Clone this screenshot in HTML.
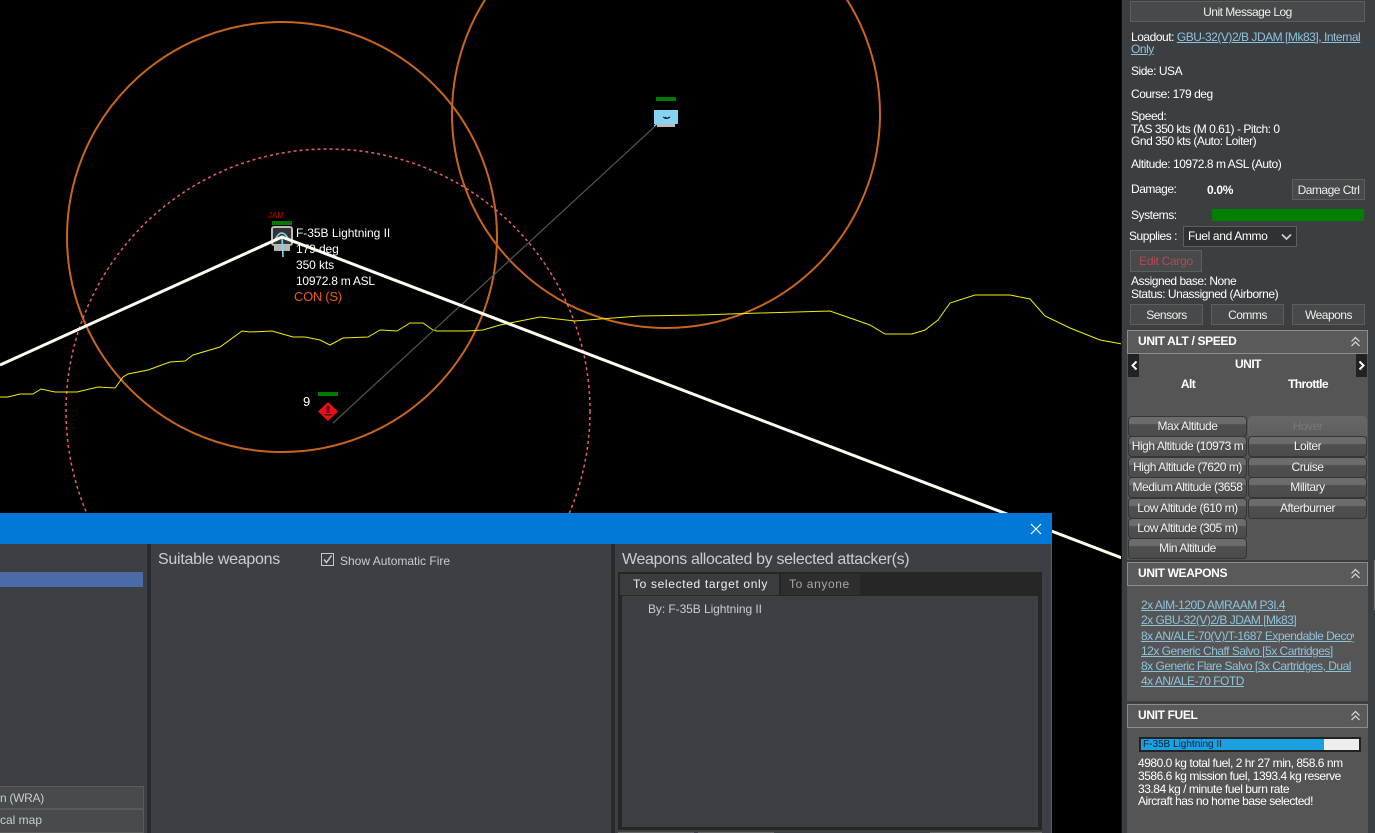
<!DOCTYPE html>
<html><head><meta charset="utf-8">
<style>
html,body{margin:0;padding:0;background:#000;}
#r{position:relative;width:1375px;height:833px;overflow:hidden;background:#000;font-family:"Liberation Sans",Arial,sans-serif;font-size:12px;color:#fff;}
#r div{position:absolute;box-sizing:border-box;white-space:nowrap;}
.t{line-height:14px;height:14px;letter-spacing:-.47px;}
.c{text-align:center;}
.b{background:#464a4a;border:1px solid #5c5f5f;text-align:center;line-height:20px;color:#eee;letter-spacing:-.5px;}
.h{left:1127px;width:241px;height:24px;background:#5a5a5a;border:1px solid #8c8c8c;font-weight:bold;line-height:21px;padding-left:10px;letter-spacing:-.35px;}
.g{height:21px;width:119px;border:1px solid #363636;border-radius:4px;background:linear-gradient(#6c6c6c 0,#6c6c6c 35%,#4f4f4f 40%,#4c4c4c 100%);text-align:center;line-height:18px;color:#f2f2f2;letter-spacing:-.45px;overflow:hidden;}
.l{left:1141px;color:#8ec3dc;text-decoration:underline;line-height:14px;height:15px;letter-spacing:-.5px;overflow:hidden;}
.d{color:#c9cdd0;letter-spacing:0;}
</style></head><body>
<div id="r">
<svg style="position:absolute;left:0;top:0" width="1375" height="833" viewBox="0 0 1375 833">
<circle cx="282" cy="237" r="215" fill="none" stroke="#c8651e" stroke-width="2"/>
<circle cx="666" cy="114" r="214" fill="none" stroke="#c8651e" stroke-width="2"/>
<circle cx="328" cy="411" r="262" fill="none" stroke="#e8606a" stroke-width="1.500" stroke-dasharray="3 3"/>
<polyline fill="none" stroke="#f0f000" stroke-width="1" points="0,397 8,397 20,394 33,394 41,389 55,392 77,392 98,387 115,388 123,377 128,374 148,370 170,362 185,361 193,355 220,347 242,331 250,332 272,331 293,337 305,337 320,340 330,345 343,338 368,337 380,330 397,331 410,323 423,323 433,330 437,331 467,331 483,330 500,325 520,321 540,317 575,321 600,319 640,316 700,315 760,313 830,311 850,318 870,325 885,334 912,334 925,330 938,320 950,303 975,295 1010,295 1030,299 1045,316 1070,328 1100,340 1122,344"/>
<line x1="333" y1="423" x2="664" y2="118" stroke="#555" stroke-width="1.200"/>
<rect x="656" y="97" width="20" height="4" fill="#007a00"/>
<rect x="654" y="110" width="24" height="14" fill="#87d3f5"/>
<rect x="657" y="124" width="18" height="3" fill="#bbb"/>
<path d="M663 117q3 2 3 1q1 1 4-1" fill="none" stroke="#111" stroke-width="1.300"/>
<line x1="654" y1="126" x2="664" y2="118" stroke="#87d3f5" stroke-width="1.200"/>
<rect x="318" y="392" width="20" height="4" fill="#007a00"/>
<path d="M328 402l10 9.500-10 9.500-10-9.500z" fill="#e8101c"/>
<path d="M326.500 406h3v7h-3zM324 414h8v1.500h-8z" fill="#5a0808"/>
<rect x="272" y="221" width="20" height="4" fill="#007a00"/>
<rect x="272" y="227" width="20" height="18" rx="2" fill="#333" stroke="#bbb" stroke-width="2"/>
<rect x="274" y="245" width="16" height="6" fill="#b5b5b5"/>
<path d="M274.500 241q7-16 15 0" fill="none" stroke="#87d3f5" stroke-width="1.600"/>
<line x1="282" y1="236" x2="283" y2="257" stroke="#87d3f5" stroke-width="1.600"/>
<polyline points="0,365 282,237 1122,558" fill="none" stroke="#fffff0" stroke-width="3"/>
</svg>

<div style="left:268px;top:211px;font-size:8px;line-height:9px;color:#d00000;">JAM</div>
<div class="t" style="left:296px;top:226px;color:#fff;letter-spacing:-.03px;">F-35B Lightning II</div>
<div class="t" style="left:296px;top:242px;color:#fff;letter-spacing:-.1px;">179 deg</div>
<div class="t" style="left:296px;top:258px;color:#fff;letter-spacing:-.1px;">350 kts</div>
<div class="t" style="left:296px;top:274px;color:#fff;letter-spacing:-.25px;">10972.8 m ASL</div>
<div class="t" style="left:294px;top:290px;color:#e8600c;font-size:13px;letter-spacing:-.3px;">CON (S)</div>
<div class="t" style="left:303px;top:395px;color:#fff;font-size:13px;">9</div>

<!-- dialog -->
<div style="left:0;top:513px;width:1052px;height:320px;background:#3c3f43;border-right:1px solid #0078d7;"></div>
<div style="left:0;top:513px;width:1052px;height:31px;background:#0078d7;"></div>
<svg style="position:absolute;left:1030px;top:523px" width="12" height="12" viewBox="0 0 12 12"><path d="M1 1l10 10M11 1L1 11" stroke="#fff" stroke-width="1.200" fill="none"/></svg>
<div style="left:147px;top:544px;width:4px;height:289px;background:#2a2a2a;"></div>
<div style="left:611px;top:544px;width:4px;height:289px;background:#2a2a2a;"></div>
<div style="left:0;top:572px;width:143px;height:15px;background:#4a6ba8;"></div>
<div style="left:-2px;top:786px;width:146px;height:23px;background:#474b4b;border:1px solid #5a5c5c;"></div>
<div style="left:-2px;top:809px;width:146px;height:24px;background:#474b4b;border:1px solid #5a5c5c;"></div>
<div class="t d" style="left:0;top:791px;letter-spacing:-.3px;">n (WRA)</div>
<div class="t d" style="left:0;top:813px;">cal map</div>
<div class="d" style="left:158px;top:550px;font-size:16px;line-height:20px;letter-spacing:-.27px;">Suitable weapons</div>
<div style="left:321px;top:553px;width:13px;height:13px;border:1px solid #c8c8c8;"></div>
<svg style="position:absolute;left:321px;top:553px" width="13" height="13" viewBox="0 0 13 13"><path d="M3 6.500l2.500 3L10.500 2.500" stroke="#c8c8c8" stroke-width="1.500" fill="none"/></svg>
<div class="t d" style="left:340px;top:554px;">Show Automatic Fire</div>
<div class="d" style="left:622px;top:550px;font-size:16px;line-height:20px;letter-spacing:-.34px;">Weapons allocated by selected attacker(s)</div>
<div style="left:618px;top:572px;width:424px;height:258px;background:#262626;"></div>
<div style="left:620px;top:574px;width:159px;height:21px;background:#3a3c3e;"></div>
<div style="left:781px;top:574px;width:79px;height:21px;background:#2e2e2e;"></div>
<div class="t" style="left:633px;top:577px;color:#f0f0f0;letter-spacing:.65px;">To selected target only</div>
<div class="t" style="left:789px;top:577px;color:#a8a8a8;letter-spacing:.6px;">To anyone</div>
<div style="left:622px;top:596px;width:416px;height:231px;background:#3c3f43;"></div>
<div class="t d" style="left:648px;top:602px;letter-spacing:-.07px;">By: F-35B Lightning II</div>
<div style="left:618px;top:832px;width:76px;height:1px;background:#666;"></div>
<div style="left:698px;top:832px;width:76px;height:1px;background:#666;"></div>
<div style="left:930px;top:832px;width:112px;height:1px;background:#666;"></div>

<!-- side panel -->
<div style="left:1121px;top:0;width:254px;height:833px;background:#3c3f41;"></div>
<div style="left:1121px;top:0;width:1px;height:833px;background:#111;"></div>
<div class="b" style="left:1130px;top:1px;width:235px;height:21px;">Unit Message Log</div>
<div class="t" style="left:1131px;top:30px;">Loadout: <span style="color:#8ec3dc;text-decoration:underline;">GBU-32(V)2/B JDAM [Mk83], Internal</span></div>
<div class="t" style="left:1131px;top:42px;color:#8ec3dc;text-decoration:underline;">Only</div>
<div class="t" style="left:1131px;top:64px;">Side: USA</div>
<div class="t" style="left:1131px;top:87px;">Course: 179 deg</div>
<div class="t" style="left:1131px;top:109px;">Speed:</div>
<div class="t" style="left:1131px;top:122px;">TAS 350 kts (M 0.61) - Pitch: 0</div>
<div class="t" style="left:1131px;top:134px;">Gnd 350 kts (Auto: Loiter)</div>
<div class="t" style="left:1131px;top:157px;">Altitude: 10972.8 m ASL (Auto)</div>
<div class="t" style="left:1131px;top:182px;">Damage:</div>
<div class="t" style="left:1207px;top:183px;font-weight:bold;letter-spacing:-.3px;">0.0%</div>
<div class="b" style="left:1292px;top:179px;width:73px;height:21px;">Damage Ctrl</div>
<div class="t" style="left:1131px;top:208px;">Systems:</div>
<div style="left:1212px;top:209px;width:152px;height:12px;background:#007f00;"></div>
<div class="t" style="left:1129px;top:229px;">Supplies :</div>
<div style="left:1183px;top:226px;width:114px;height:21px;background:#2f3133;border:1px solid #5c5f5f;line-height:18px;padding-left:4px;letter-spacing:-.35px;">Fuel and Ammo</div>
<svg style="position:absolute;left:1281px;top:233px" width="11" height="8" viewBox="0 0 11 8"><path d="M1 1.500l4.500 4.500L10 1.500" stroke="#ccc" stroke-width="1.800" fill="none"/></svg>
<div class="b" style="left:1130px;top:250px;width:72px;height:22px;color:#b8484f;line-height:20px;letter-spacing:-.3px;">Edit Cargo</div>
<div class="t" style="left:1131px;top:274px;">Assigned base: None</div>
<div class="t" style="left:1131px;top:287px;">Status: Unassigned (Airborne)</div>
<div class="b" style="left:1130px;top:304px;width:73px;height:21px;">Sensors</div>
<div class="b" style="left:1211px;top:304px;width:73px;height:21px;">Comms</div>
<div class="b" style="left:1292px;top:304px;width:73px;height:21px;">Weapons</div>

<div style="left:1127px;top:330px;width:241px;height:503px;background:#555;"></div>
<div style="left:1127px;top:560px;width:241px;height:3px;background:#3c3f41;"></div>
<div style="left:1127px;top:701px;width:241px;height:3px;background:#3c3f41;"></div>

<div class="h" style="top:330px;">UNIT ALT / SPEED</div>
<div style="left:1128px;top:354px;width:11px;height:23px;background:#222;"></div>
<div style="left:1356px;top:354px;width:11px;height:23px;background:#222;"></div>
<svg style="position:absolute;left:1128px;top:354px" width="240" height="23" viewBox="0 0 240 23"><path d="M8.500 7.500L4.500 11.500l4 4" stroke="#fff" stroke-width="2" fill="none"/><path d="M231.500 7.500l4 4-4 4" stroke="#fff" stroke-width="2" fill="none"/></svg>
<div class="t c" style="left:1128px;top:357px;width:240px;font-weight:bold;letter-spacing:-.5px;">UNIT</div>
<div class="t c" style="left:1168px;top:377px;width:40px;font-weight:bold;letter-spacing:-.6px;">Alt</div>
<div class="t c" style="left:1268px;top:377px;width:80px;font-weight:bold;letter-spacing:-.6px;">Throttle</div>

<div class="g" style="left:1128px;top:416px;">Max Altitude</div>
<div class="g" style="left:1128px;top:436px;">High Altitude (10973 m</div>
<div class="g" style="left:1128px;top:457px;">High Altitude (7620 m)</div>
<div class="g" style="left:1128px;top:477px;">Medium Altitude (3658</div>
<div class="g" style="left:1128px;top:498px;">Low Altitude (610 m)</div>
<div class="g" style="left:1128px;top:518px;">Low Altitude (305 m)</div>
<div class="g" style="left:1128px;top:538px;">Min Altitude</div>
<div class="g" style="left:1248px;top:416px;color:#777;background:linear-gradient(#676767,#5e5e5e);border-color:#666;">Hover</div>
<div class="g" style="left:1248px;top:436px;">Loiter</div>
<div class="g" style="left:1248px;top:457px;">Cruise</div>
<div class="g" style="left:1248px;top:477px;">Military</div>
<div class="g" style="left:1248px;top:498px;">Afterburner</div>

<div class="h" style="top:562px;">UNIT WEAPONS</div>
<div class="l" style="top:598px;width:213px;">2x AIM-120D AMRAAM P3I.4</div>
<div class="l" style="top:613px;width:213px;">2x GBU-32(V)2/B JDAM [Mk83]</div>
<div class="l" style="top:629px;width:213px;">8x AN/ALE-70(V)/T-1687 Expendable Decoy</div>
<div class="l" style="top:644px;width:213px;">12x Generic Chaff Salvo [5x Cartridges]</div>
<div class="l" style="top:659px;width:213px;">8x Generic Flare Salvo [3x Cartridges, Dual</div>
<div class="l" style="top:674px;width:213px;">4x AN/ALE-70 FOTD</div>

<div class="h" style="top:704px;">UNIT FUEL</div>
<svg style="position:absolute;left:1350px;top:336px" width="11" height="12" viewBox="0 0 11 12"><path d="M1.500 5.500l4-4 4 4M1.500 10l4-4 4 4" stroke="#ddd" stroke-width="1.200" fill="none"/></svg>
<svg style="position:absolute;left:1350px;top:568px" width="11" height="12" viewBox="0 0 11 12"><path d="M1.500 5.500l4-4 4 4M1.500 10l4-4 4 4" stroke="#ddd" stroke-width="1.200" fill="none"/></svg>
<svg style="position:absolute;left:1350px;top:710px" width="11" height="12" viewBox="0 0 11 12"><path d="M1.500 5.500l4-4 4 4M1.500 10l4-4 4 4" stroke="#ddd" stroke-width="1.200" fill="none"/></svg>
<div style="left:1139px;top:737px;width:222px;height:15px;background:#eee;border:2px solid #222;"></div>
<div style="left:1141px;top:739px;width:183px;height:11px;background:#1ba1e2;"></div>
<div style="left:1143px;top:739px;font-size:10px;line-height:11px;color:#123;">F-35B Lightning II</div>
<div class="t" style="left:1138px;top:756px;">4980.0 kg total fuel, 2 hr 27 min, 858.6 nm</div>
<div class="t" style="left:1138px;top:769px;">3586.6 kg mission fuel, 1393.4 kg reserve</div>
<div class="t" style="left:1138px;top:782px;">33.84 kg / minute fuel burn rate</div>
<div class="t" style="left:1138px;top:794px;">Aircraft has no home base selected!</div>
<div style="left:1374px;top:560px;width:1px;height:50px;background:#777;"></div>
</div>
</body></html>
